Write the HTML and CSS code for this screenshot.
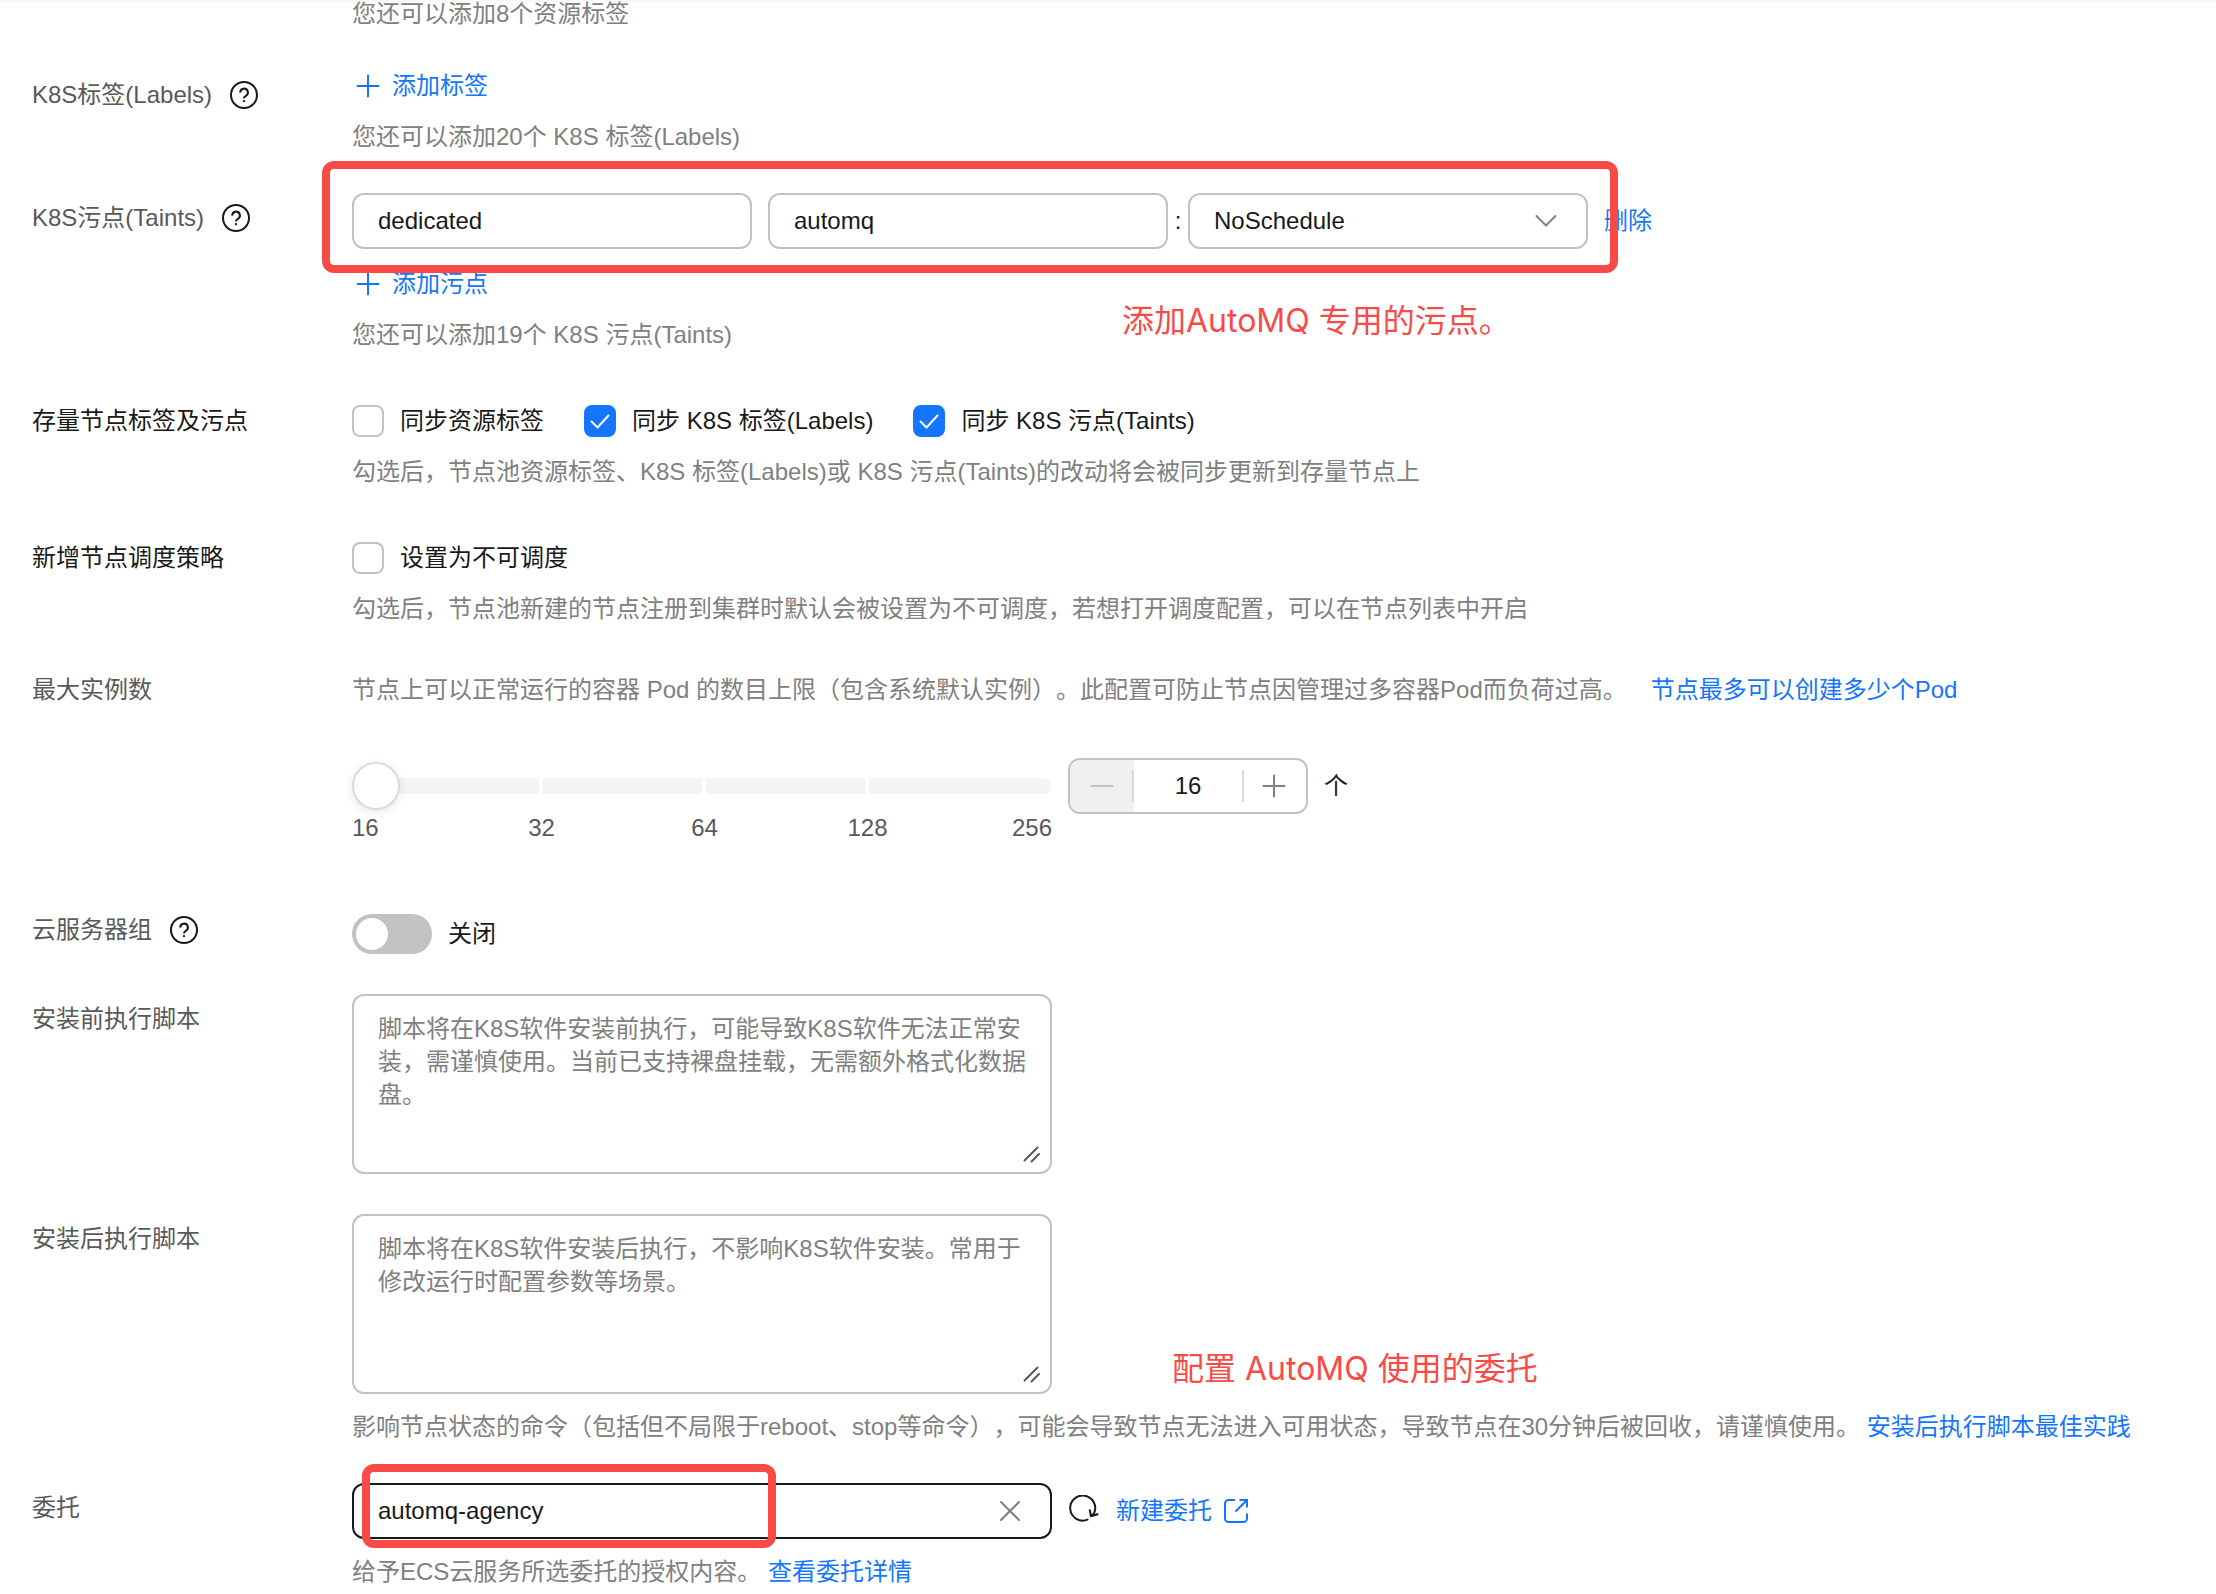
FILE: index.html
```html
<!DOCTYPE html>
<html lang="zh-CN">
<head>
<meta charset="utf-8">
<meta name="viewport" content="width=device-width, initial-scale=1">
<title>节点池配置</title>
<link rel="stylesheet" href="styles.css">
</head>
<body>
<svg class="sprite" aria-hidden="true">
  <symbol id="i-help" viewBox="0 0 28 28">
    <circle cx="14" cy="14" r="13" fill="none" stroke="currentColor" stroke-width="2"/>
    <path d="M10.3 11.6a3.8 3.8 0 1 1 5.6 3.2c-1.3.7-1.9 1.3-1.9 2.6" fill="none" stroke="currentColor" stroke-width="2"/>
    <circle cx="14" cy="20.1" r="1.2" fill="currentColor"/>
  </symbol>
  <symbol id="i-plus" viewBox="0 0 32 32">
    <path d="M16 5.500V26.500M5.500 16H26.500" fill="none" stroke="currentColor" stroke-width="2" stroke-linecap="round"/>
  </symbol>
  <symbol id="i-grip" viewBox="0 0 20 20">
    <path d="M2.500 16.500 15.500 3.500M9.500 17.500 17 10" fill="none" stroke="currentColor" stroke-width="2" stroke-linecap="round"/>
  </symbol>
</svg>

<form class="form">
  <div class="row">
    <div class="label"></div>
    <div class="content"><p class="hint">您还可以添加8个资源标签</p></div>
  </div>

  <div class="row gap-m">
    <div class="label">K8S标签(Labels)<svg class="help"><use href="#i-help"/></svg></div>
    <div class="content">
      <button type="button" class="add"><svg class="plus"><use href="#i-plus"/></svg>添加标签</button>
      <p class="hint">您还可以添加20个 K8S 标签(Labels)</p>
    </div>
  </div>

  <div class="row gap-m">
    <div class="label">K8S污点(Taints)<svg class="help"><use href="#i-help"/></svg></div>
    <div class="content">
      <div class="taint">
        <input class="box" type="text" value="dedicated" aria-label="污点键">
        <input class="box" type="text" value="automq" aria-label="污点值">
        <span class="colon">:</span>
        <span class="pick">
          <select class="box" aria-label="污点效果"><option>NoSchedule</option></select>
          <svg class="chevron" viewBox="0 0 24 24"><path d="M2.500 7 12 16.500 21.500 7" fill="none" stroke="currentColor" stroke-width="2" stroke-linecap="round" stroke-linejoin="round"/></svg>
        </span>
        <button type="button" class="remove">删除</button>
        <span class="mark mark-taint"></span>
      </div>
      <button type="button" class="add"><svg class="plus"><use href="#i-plus"/></svg>添加污点</button>
      <p class="hint">您还可以添加19个 K8S 污点(Taints)</p>
      <span class="note note-taint">添加AutoMQ 专用的污点。</span>
    </div>
  </div>

  <div class="row gap-l flat">
    <div class="label dark">存量节点标签及污点</div>
    <div class="content">
      <div class="checks">
        <label class="check"><input type="checkbox">同步资源标签</label>
        <label class="check"><input type="checkbox" checked>同步 K8S 标签(Labels)</label>
        <label class="check"><input type="checkbox" checked>同步 K8S 污点(Taints)</label>
      </div>
      <p class="hint">勾选后，节点池资源标签、K8S 标签(Labels)或 K8S 污点(Taints)的改动将会被同步更新到存量节点上</p>
    </div>
  </div>

  <div class="row gap-l flat">
    <div class="label dark">新增节点调度策略</div>
    <div class="content">
      <div class="checks"><label class="check"><input type="checkbox">设置为不可调度</label></div>
      <p class="hint">勾选后，节点池新建的节点注册到集群时默认会被设置为不可调度，若想打开调度配置，可以在节点列表中开启</p>
    </div>
  </div>

  <div class="row gap-p flat">
    <label class="label" for="pods">最大实例数</label>
    <div class="content pods">
      <p class="hint pods-hint"><span>节点上可以正常运行的容器 Pod 的数目上限（包含系统默认实例）。此配置可防止节点因管理过多容器Pod而负荷过高。</span><a href="#">节点最多可以创建多少个Pod</a></p>
      <div class="range">
        <div class="slider">
          <input type="range" min="0" max="4" value="0" aria-label="最大实例数">
          <div class="ticks"><span>16</span><span>32</span><span>64</span><span>128</span><span>256</span></div>
        </div>
        <div class="stepper">
          <button type="button" class="minus" disabled aria-label="减少"><svg viewBox="0 0 32 32"><path d="M5.500 16H26.500" stroke="currentColor" stroke-width="2" stroke-linecap="round"/></svg></button>
          <input id="pods" type="text" value="16">
          <button type="button" class="more" aria-label="增加"><svg><use href="#i-plus"/></svg></button>
        </div>
        <span class="unit">个</span>
      </div>
    </div>
  </div>

  <div class="row gap-xl flat">
    <label class="label" for="group">云服务器组<svg class="help"><use href="#i-help"/></svg></label>
    <div class="content"><div class="toggle"><input id="group" type="checkbox" role="switch"><span>关闭</span></div></div>
  </div>

  <div class="row gap-m">
    <label class="label" for="pre">安装前执行脚本</label>
    <div class="content">
      <div class="script"><textarea id="pre" placeholder="脚本将在K8S软件安装前执行，可能导致K8S软件无法正常安装，需谨慎使用。当前已支持裸盘挂载，无需额外格式化数据盘。"></textarea><svg class="grip"><use href="#i-grip"/></svg></div>
    </div>
  </div>

  <div class="row gap-m tight">
    <label class="label" for="post">安装后执行脚本</label>
    <div class="content">
      <div class="script"><textarea id="post" placeholder="脚本将在K8S软件安装后执行，不影响K8S软件安装。常用于修改运行时配置参数等场景。"></textarea><svg class="grip"><use href="#i-grip"/></svg></div>
      <p class="hint">影响节点状态的命令（包括但不局限于reboot、stop等命令），可能会导致节点无法进入可用状态，导致节点在30分钟后被回收，请谨慎使用。 <a href="#">安装后执行脚本最佳实践</a></p>
      <span class="note note-agency">配置 AutoMQ 使用的委托</span>
    </div>
  </div>

  <div class="row gap-m tight">
    <label class="label" for="agency">委托</label>
    <div class="content">
      <div class="agency">
        <div class="field">
          <input id="agency" class="box focus" type="text" value="automq-agency">
          <button type="button" class="clear" aria-label="清除"><svg viewBox="0 0 24 24"><path d="M3 3 21 21M21 3 3 21" stroke="currentColor" stroke-width="2" stroke-linecap="round"/></svg></button>
          <span class="mark mark-agency"></span>
        </div>
        <button type="button" class="refresh" aria-label="刷新"><svg viewBox="0 0 32 32"><path d="M19.500 24.600A12.500 12.500 0 1 1 26 18.400L23.400 21M21.800 15.200 23 21.200 29.600 19.200" fill="none" stroke="currentColor" stroke-width="2" stroke-linecap="round" stroke-linejoin="round"/></svg></button>
        <a class="create" href="#">新建委托<svg viewBox="0 0 24 24"><path d="M11 1H4.500A3.500 3.500 0 0 0 1 4.500V19.500A3.500 3.500 0 0 0 4.500 23H19.500A3.500 3.500 0 0 0 23 19.500V14.500M15.500 1H23V8.500M22.500 1.500 11.500 12.500" fill="none" stroke="currentColor" stroke-width="2"/></svg></a>
      </div>
      <p class="hint">给予ECS云服务所选委托的授权内容。 <a href="#">查看委托详情</a></p>
    </div>
  </div>
</form>
</body>
</html>
```

FILE: styles.css
```css
* {
  box-sizing: border-box;
}

body {
  margin: 0;
  background: linear-gradient(#f6f6f6, #fff 4px) no-repeat #fff;
  color: #191919;
  font: 24px/32px "Liberation Sans", "Noto Sans CJK SC", sans-serif;
  text-spacing-trim: space-all;
  overflow-x: hidden;
}

input,
select,
textarea,
button {
  margin: 0;
  font: inherit;
  color: inherit;
  text-spacing-trim: inherit;
}

button {
  padding: 0;
  border: 0;
  background: none;
}

a {
  color: #1476ff;
  text-decoration: none;
}

p {
  margin: 0;
}

svg {
  display: block;
  flex: none;
}

.sprite {
  position: absolute;
  width: 0;
  height: 0;
}

/* Form rows */
.form {
  margin-top: -2px;
  padding-left: 32px;
}

.row {
  display: grid;
  grid-template-columns: 320px 1fr;
}

.gap-m {
  margin-top: 40px;
}

.gap-l {
  margin-top: 54px;
}

.gap-p {
  margin-top: 49px;
}

.gap-xl {
  margin-top: 72px;
}

.label {
  display: flex;
  align-items: center;
  align-self: start;
  gap: 18px;
  padding-top: 9px;
  color: #595959;
}

.flat .label {
  padding-top: 0;
}

.label.dark {
  color: #191919;
}

.help {
  width: 28px;
  height: 28px;
  color: #191919;
}

.content {
  position: relative;
  display: flex;
  flex-direction: column;
  align-items: flex-start;
  gap: 19px;
}

.tight .content {
  gap: 17px;
}

.hint {
  color: #808080;
}

.add {
  display: flex;
  align-items: center;
  gap: 8px;
  color: #1476ff;
}

.plus {
  width: 32px;
  height: 32px;
}

/* Text boxes */
.box {
  width: 400px;
  height: 56px;
  padding: 0 24px;
  border: 2px solid #c2c2c2;
  border-radius: 12px;
  background: #fff;
  outline: 0;
  appearance: none;
}

.taint {
  position: relative;
  display: flex;
  align-items: center;
}

.taint input + input {
  margin-left: 16px;
}

.colon {
  width: 20px;
  text-align: center;
}

.pick {
  position: relative;
}

.pick .box {
  display: block;
}

.chevron {
  position: absolute;
  top: 16px;
  right: 30px;
  width: 24px;
  height: 24px;
  color: #808080;
  pointer-events: none;
}

.remove {
  margin-left: 16px;
  color: #1476ff;
}

/* Red call-outs lying over the form */
.mark {
  position: absolute;
  border: 8px solid #f84b48;
  border-radius: 12px;
  pointer-events: none;
}

.mark-taint {
  inset: -32px 34px -24px -30px;
}

.mark-agency {
  top: -19px;
  left: 10px;
  width: 414px;
  height: 84px;
}

.note {
  position: absolute;
  color: #f84b48;
  font: 32px/48px Inter, "Noto Sans CJK SC", sans-serif;
  white-space: nowrap;
}

.note-taint {
  top: 104px;
  left: 770px;
}

.note-agency {
  top: 131px;
  left: 820px;
}

/* Tick boxes */
.checks {
  display: flex;
  gap: 40px;
}

.check {
  display: flex;
  align-items: center;
  gap: 16px;
}

.check input {
  width: 32px;
  height: 32px;
  border: 2px solid #c2c2c2;
  border-radius: 8px;
  appearance: none;
}

.check input:checked {
  border-color: #1476ff;
  background: #1476ff url("data:image/svg+xml,%3Csvg xmlns='http://www.w3.org/2000/svg' viewBox='0 0 28 28'%3E%3Cpath d='M5.500 14.500 11.500 20.500 22.500 8.500' fill='none' stroke='%23fff' stroke-width='2' stroke-linecap='round' stroke-linejoin='round'/%3E%3C/svg%3E") center / 28px no-repeat;
}

/* Slider and stepper */
.content.pods {
  gap: 52px;
}

.pods-hint {
  display: flex;
  gap: 24px;
}

.range {
  display: flex;
  align-items: flex-start;
  gap: 16px;
}

.slider {
  width: 700px;
}

.slider input {
  display: block;
  width: 100%;
  height: 56px;
  background: none;
  appearance: none;
}

.slider input::-webkit-slider-runnable-track {
  height: 16px;
  border-radius: 8px;
  background:
    linear-gradient(#fff, #fff) 187px 0 / 4px 16px no-repeat,
    linear-gradient(#fff, #fff) 350px 0 / 4px 16px no-repeat,
    linear-gradient(#fff, #fff) 513px 0 / 4px 16px no-repeat,
    #f5f5f5;
}

.slider input::-webkit-slider-thumb {
  width: 48px;
  height: 48px;
  margin-top: -16px;
  border: 2px solid #dbdbdb;
  border-radius: 50%;
  background: #fff;
  box-shadow: 0 2px 8px rgba(0, 0, 0, 0.1);
  appearance: none;
}

.ticks {
  display: grid;
  grid-template-columns: 108px 163px 163px 163px 1fr;
  color: #595959;
  line-height: 28px;
  text-align: center;
}

.ticks span:first-child {
  text-align: left;
}

.ticks span:last-child {
  text-align: right;
}

.stepper {
  display: flex;
  width: 240px;
  height: 56px;
  border: 2px solid #c2c2c2;
  border-radius: 12px;
  overflow: hidden;
}

.stepper button {
  display: grid;
  flex: none;
  place-items: center;
  width: 64px;
}

.stepper svg {
  width: 32px;
  height: 32px;
}

.stepper .minus {
  background: linear-gradient(#dbdbdb, #dbdbdb) right / 2px 32px no-repeat #f0f0f0;
  color: #c2c2c2;
}

.stepper .more {
  background: linear-gradient(#dbdbdb, #dbdbdb) left / 2px 32px no-repeat;
  color: #808080;
}

.stepper input {
  flex: 1;
  min-width: 0;
  padding: 0;
  border: 0;
  background: none;
  text-align: center;
}

.unit {
  line-height: 56px;
}

/* Switch */
.toggle {
  display: flex;
  align-items: center;
  gap: 16px;
}

.toggle input {
  display: flex;
  align-items: center;
  width: 80px;
  height: 40px;
  padding: 4px;
  border-radius: 20px;
  background: #c2c2c2;
  appearance: none;
}

.toggle input::before {
  width: 32px;
  height: 32px;
  border-radius: 50%;
  background: #fff;
  content: "";
}

/* Scripts */
.script {
  position: relative;
}

.script textarea {
  display: block;
  width: 700px;
  height: 180px;
  padding: 16px 20px 16px 24px;
  border: 2px solid #c2c2c2;
  border-radius: 12px;
  line-height: 33px;
  resize: none;
}

.script textarea::placeholder {
  color: #808080;
}

.grip {
  position: absolute;
  right: 10px;
  bottom: 10px;
  width: 20px;
  height: 20px;
  color: #595959;
}

/* Agency */
.agency {
  display: flex;
  align-items: center;
}

.field {
  position: relative;
}

.box.focus {
  display: block;
  width: 700px;
  border-color: #191919;
}

.clear {
  position: absolute;
  top: 16px;
  right: 30px;
  color: #808080;
}

.clear svg {
  width: 24px;
  height: 24px;
}

.refresh {
  margin: 0 16px;
}

.refresh svg {
  width: 32px;
  height: 32px;
}

.create {
  display: flex;
  align-items: center;
  gap: 12px;
}

.create svg {
  width: 24px;
  height: 24px;
}
```
